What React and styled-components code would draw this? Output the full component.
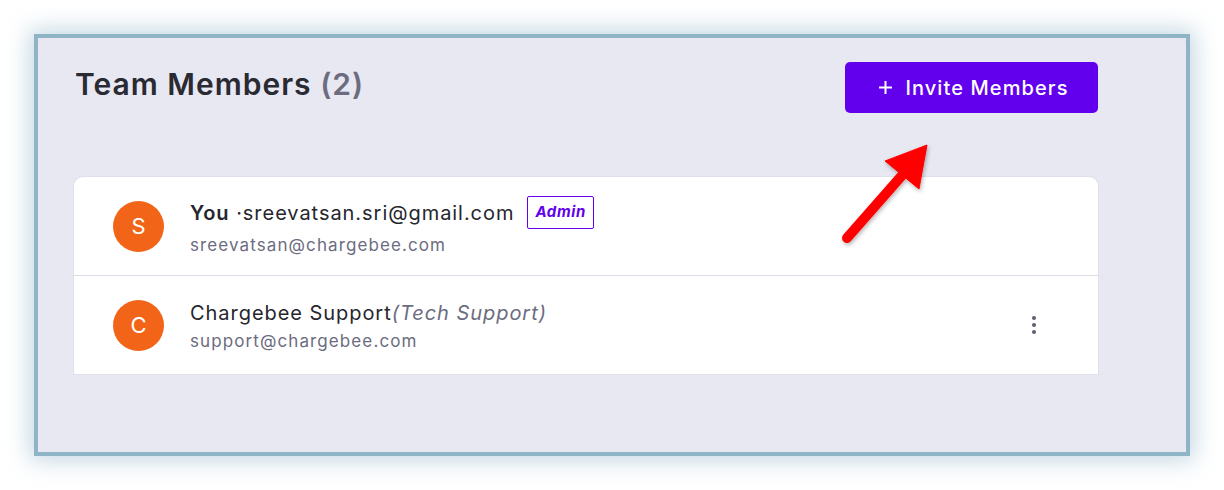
import React from "react";
import styled, { createGlobalStyle } from "styled-components";

const GlobalStyle = createGlobalStyle`
  html, body {
    margin: 0;
    padding: 0;
    background: #ffffff;
    font-family: Inter, "Noto Sans", "Liberation Sans", sans-serif;
  }
`;

const Page = styled.div`
  position: relative;
  width: 1224px;
  height: 490px;
  padding: 34px;
  box-sizing: border-box;
`;

const Frame = styled.div`
  width: 1156px;
  height: 422px;
  box-sizing: border-box;
  border: 4px solid #8fb4c5;
  background: #e8e8f2;
  box-shadow: 0 0 22px 4px rgba(120, 165, 190, 0.45);
  padding: 24px 88px 0 36px;
  display: flex;
  flex-direction: column;
`;

const Header = styled.div`
  display: flex;
  align-items: center;
  justify-content: space-between;
  height: 51px;
  margin-bottom: 64px;
`;

const Title = styled.h1`
  margin: 0 0 8px 1px;
  font-size: 30px;
  font-weight: 600;
  color: #2a2a32;
  letter-spacing: 1px;
`;

const Count = styled.span`
  color: #6c6c80;
`;

const InviteButton = styled.button`
  display: flex;
  align-items: center;
  justify-content: center;
  gap: 12px;
  width: 253px;
  height: 51px;
  padding: 0 0 0 4px;
  border: none;
  border-radius: 5px;
  background: #6200ee;
  color: #ffffff;
  font-family: inherit;
  font-size: 20px;
  font-weight: 500;
  letter-spacing: 1.1px;
  cursor: pointer;
`;

const Card = styled.div`
  background: #ffffff;
  border-radius: 9px 9px 0 0;
  box-shadow: 0 0 0 1px #e0e0ea;
`;

const Row = styled.div`
  display: flex;
  align-items: center;
  height: ${(p) => (p.first ? 98 : 99)}px;
  box-sizing: border-box;
  padding: 0 58px 0 39px;
  border-top: ${(p) => (p.first ? "none" : "1px solid #dcdce6")};
`;

const Avatar = styled.div`
  width: 51px;
  height: 51px;
  border-radius: 50%;
  background: #f26519;
  color: #ffffff;
  display: flex;
  align-items: center;
  justify-content: center;
  font-size: 22px;
  font-weight: 400;
  flex-shrink: 0;
`;

const Info = styled.div`
  flex: 1;
  margin-left: 26px;
  display: flex;
  flex-direction: column;
  gap: 5px;
  margin-top: ${(p) => p.shift || 0}px;
`;

const NameLine = styled.div`
  display: flex;
  align-items: center;
  font-size: 20px;
  line-height: 24px;
  letter-spacing: 0.95px;
  color: #26262e;
`;

const Strong = styled.span`
  font-weight: 600;
`;

const Role = styled.span`
  font-style: italic;
  color: #6c6c80;
`;

const Badge = styled.span`
  margin-left: 13px;
  padding: 5px 7px 6px;
  border: 1.5px solid #6200ee;
  border-radius: 2px;
  color: #6200ee;
  font-size: 15px;
  font-weight: 700;
  font-style: italic;
  letter-spacing: 0.6px;
  line-height: 20px;
`;

const Email = styled.div`
  font-size: 17px;
  line-height: 22px;
  letter-spacing: 1.1px;
  color: #6c6c80;
`;

const Kebab = styled.button`
  display: flex;
  flex-direction: column;
  gap: 3px;
  background: none;
  border: none;
  padding: 4px;
  cursor: pointer;
`;

const Dot = styled.span`
  width: 4px;
  height: 4px;
  border-radius: 50%;
  background: #5e5e70;
`;

const Annotation = styled.svg`
  position: absolute;
  left: 0;
  top: 0;
  pointer-events: none;
`;

const members = [
  {
    initial: "S",
    name: (
      <>
        <Strong>You</Strong>&nbsp;·sreevatsan.sri@gmail.com
        <Badge>Admin</Badge>
      </>
    ),
    email: "sreevatsan@chargebee.com",
    shift: 0,
  },
  {
    initial: "C",
    name: (
      <>
        Chargebee Support<Role>(Tech Support)</Role>
      </>
    ),
    email: "support@chargebee.com",
    shift: 3,
    menu: true,
  },
];

export default function App() {
  return (
    <Page>
      <GlobalStyle />
      <Frame>
        <Header>
          <Title>
            Team Members <Count>(2)</Count>
          </Title>
          <InviteButton>
            <svg width="15" height="15" viewBox="0 0 15 15">
              <path d="M7.5 1v13M1 7.5h13" stroke="#fff" strokeWidth="2" />
            </svg>
            Invite Members
          </InviteButton>
        </Header>
        <Card>
          {members.map((m, i) => (
            <Row key={m.email} first={i === 0}>
              <Avatar>{m.initial}</Avatar>
              <Info shift={m.shift}>
                <NameLine>{m.name}</NameLine>
                <Email>{m.email}</Email>
              </Info>
              {m.menu && (
                <Kebab aria-label="More">
                  <Dot />
                  <Dot />
                  <Dot />
                </Kebab>
              )}
            </Row>
          ))}
        </Card>
      </Frame>
      <Annotation width="1224" height="490" viewBox="0 0 1224 490">
        <defs>
          <filter id="arrowShadow" x="-20%" y="-20%" width="140%" height="140%">
            <feDropShadow dx="1" dy="2" stdDeviation="2" floodColor="#000" floodOpacity="0.3" />
          </filter>
        </defs>
        <g filter="url(#arrowShadow)" fill="#ff0000" stroke="#ff0000">
          <line x1="847" y1="238" x2="905" y2="172" strokeWidth="10" strokeLinecap="round" />
          <polygon points="927,145 885,161 919,189" strokeWidth="1" strokeLinejoin="round" />
        </g>
      </Annotation>
    </Page>
  );
}
